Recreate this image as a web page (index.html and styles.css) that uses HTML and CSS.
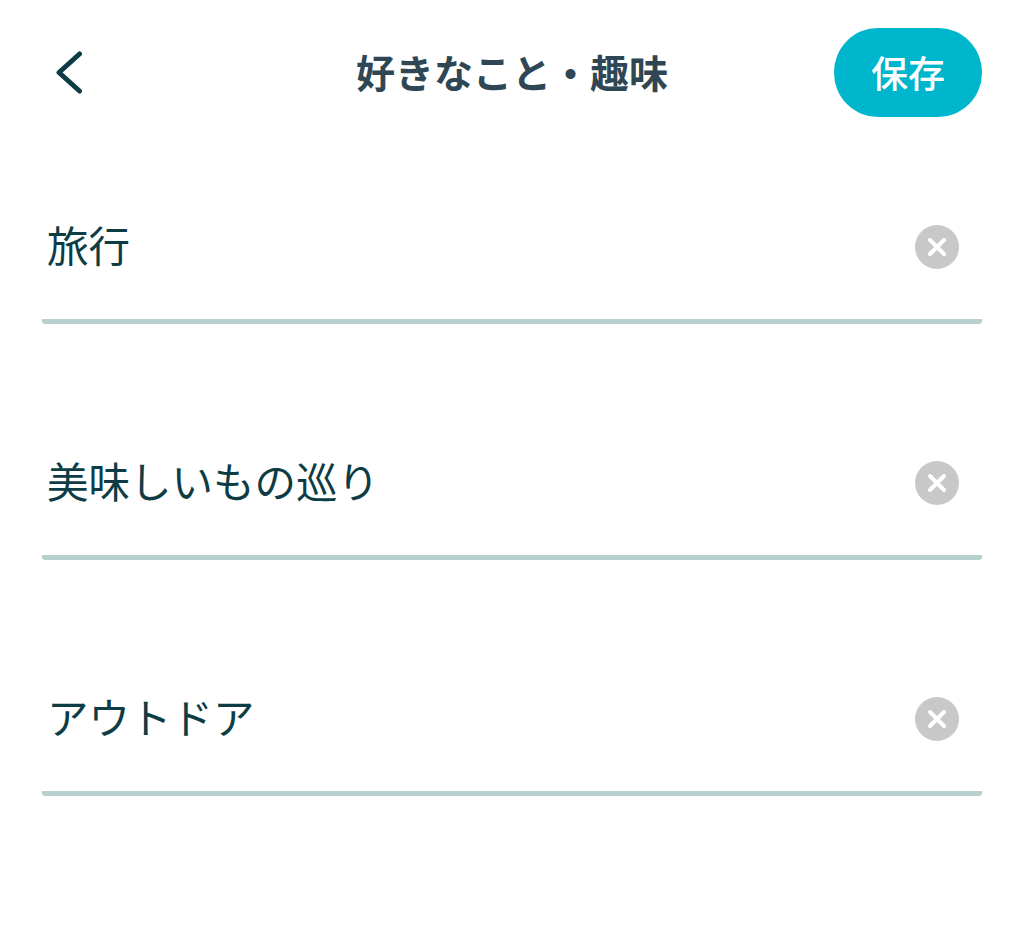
FILE: index.html
```html
<!DOCTYPE html>
<html lang="ja">

<head>
    <meta charset="UTF-8">
    <meta name="viewport" content="width=device-width, initial-scale=1.0">
    <title>好きなこと・趣味</title>
    <link rel="stylesheet" href="styles.css">
</head>

<body>
    <div class="container">
        <header class="header">
            <button class="back-btn" aria-label="戻る">
                <svg width="30" height="44" viewBox="0 0 30 44">
                    <path d="M25.5 3 L5 21.5 L25.5 40" class="back-icon"></path>
                </svg>
            </button>
            <h1 class="title">好きなこと・趣味</h1>
            <button class="save-btn">保存</button>
        </header>
        <div class="list">
            <div class="row">
                <span class="row-text">旅行</span>
                <button class="clear-btn" aria-label="削除">
                    <svg width="44" height="44" viewBox="0 0 44 44">
                        <circle cx="22" cy="22" r="22" fill="#c8c8c8"></circle>
                        <path d="M15 15 L29 29 M29 15 L15 29" class="clear-icon"></path>
                    </svg>
                </button>
            </div>
            <div class="row">
                <span class="row-text">美味しいもの巡り</span>
                <button class="clear-btn" aria-label="削除">
                    <svg width="44" height="44" viewBox="0 0 44 44">
                        <circle cx="22" cy="22" r="22" fill="#c8c8c8"></circle>
                        <path d="M15 15 L29 29 M29 15 L15 29" class="clear-icon"></path>
                    </svg>
                </button>
            </div>
            <div class="row">
                <span class="row-text">アウトドア</span>
                <button class="clear-btn" aria-label="削除">
                    <svg width="44" height="44" viewBox="0 0 44 44">
                        <circle cx="22" cy="22" r="22" fill="#c8c8c8"></circle>
                        <path d="M15 15 L29 29 M29 15 L15 29" class="clear-icon"></path>
                    </svg>
                </button>
            </div>
        </div>
    </div>
</body>

</html>
```

FILE: styles.css
```css
* {
    box-sizing: border-box;
}

body {
    margin: 0;
    background-color: #ffffff;
    font-family: "Noto Sans CJK JP", "Noto Sans", sans-serif;
}

.container {
    height: 929px;
    padding: 28px 42px 0;
    overflow: hidden;
}

button {
    padding: 0;
    border: none;
    background: none;
    font-family: inherit;
}

.header {
    display: flex;
    align-items: center;
    justify-content: space-between;
    height: 89px;
}

.back-btn {
    display: flex;
    width: 148px;
    padding-left: 12px;
}

.back-icon {
    fill: none;
    stroke: #0e3c44;
    stroke-width: 5;
    stroke-linecap: round;
    stroke-linejoin: round;
}

.title {
    margin: 0 0 2px;
    font-size: 39px;
    font-weight: 600;
    line-height: 1;
    color: #2f4654;
}

.save-btn {
    width: 148px;
    height: 89px;
    padding-bottom: 2px;
    border-radius: 44px;
    background-color: #00b6cc;
    color: #ffffff;
    font-size: 37px;
    font-weight: 500;
}

.list {
    padding-top: 56px;
}

.row {
    display: flex;
    align-items: center;
    justify-content: space-between;
    height: 151px;
    margin-bottom: 85px;
    padding: 0 23px 0 5px;
    border-bottom: 5px solid #b6d0cd;
    border-radius: 3px;
}

.row-text {
    padding-bottom: 3px;
    font-size: 41.5px;
    line-height: 1;
    color: #0e3c44;
}

.clear-btn {
    display: flex;
    margin-top: 2px;
}

.clear-icon {
    fill: none;
    stroke: #ffffff;
    stroke-width: 4;
    stroke-linecap: round;
}
```
